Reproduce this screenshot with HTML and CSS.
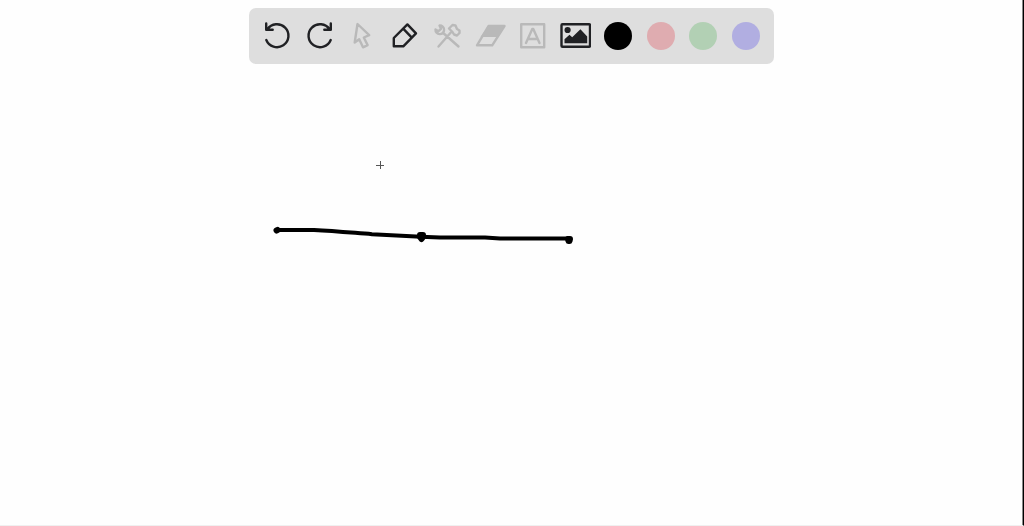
FILE: index.html
```
<!DOCTYPE html>
<html lang="en">
<head>
    <meta charset="UTF-8">
    <meta name="viewport" content="width=device-width, initial-scale=1.0">
    <title>Whiteboard</title>
    <link rel="stylesheet" href="styles.css">
</head>
<body>
    <main class="board">
        <div class="toolbar" role="toolbar" aria-label="Drawing tools">
            <button class="tool" type="button" aria-label="Undo">
                <svg viewBox="0 0 32 32"><path d="M5.200 3.500v6.300h6.500M5.200 9.800L6.400 9.300A11.500 11.500 0 1 1 5.300 20"/></svg>
            </button>
            <button class="tool" type="button" aria-label="Redo">
                <svg viewBox="0 0 32 32"><path d="M26.800 3.500v6.300h-6.500M26.800 9.800L25.600 9.300A11.500 11.500 0 1 0 26.700 20"/></svg>
            </button>
            <button class="tool muted" type="button" aria-label="Select">
                <svg viewBox="0 0 32 32"><path d="M11.500 4 8.700 22.500l4.500-3.200 3.800 8 4.600-2.200-3.800-7.600 5.400-2.300z"/></svg>
            </button>
            <button class="tool" type="button" aria-label="Pen">
                <svg viewBox="0 0 32 32"><path d="M18.400 4.400 27 13.300 14.300 26.300H4.800V18zM14.200 8.600l8.600 9"/></svg>
            </button>
            <button class="tool muted" type="button" aria-label="Tools">
                <svg viewBox="0 0 32 32">
                    <path d="M7.500 5.500A4.300 4.300 0 1 1 3.500 9.500L6.500 11.200 9 8.800zM11.200 13 26.500 26.500M18.800 12.500 6.500 26.500"/>
                    <path d="M17 8.500 20.500 5l3 .5 1.500 3.500 2.500 1.500v2.500l-2.500 2.500-3-1-1.500-2.500z"/>
                </svg>
            </button>
            <button class="tool muted" type="button" aria-label="Eraser">
                <svg viewBox="0 0 32 32"><path d="M14.500 6H30.500L18.200 25.300H3z"/><path class="solid" d="M14.500 5.500H30.500L23.500 17H6.500z"/></svg>
            </button>
            <button class="tool muted" type="button" aria-label="Text">
                <svg viewBox="0 0 32 32"><path d="M4.200 4.200h23v23h-23zM9 23l6.300-14h1L22.500 23M11 19h9.500"/></svg>
            </button>
            <button class="tool" type="button" aria-label="Image">
                <svg viewBox="0 0 32 32">
                    <rect x="2.500" y="4.200" width="28.500" height="22.600" rx="1"/>
                    <circle class="solid" cx="8.600" cy="10" r="3.100"/>
                    <path class="solid" d="M5.500 23.300v-4l5-4.500 2.700 2.400 8.200-8 6.800 7.300v6.800z"/>
                </svg>
            </button>
            <button class="tool" type="button" aria-label="Black"><span class="swatch black"></span></button>
            <button class="tool" type="button" aria-label="Red"><span class="swatch red"></span></button>
            <button class="tool" type="button" aria-label="Green"><span class="swatch green"></span></button>
            <button class="tool" type="button" aria-label="Blue"><span class="swatch blue"></span></button>
        </div>

        <svg class="drawing" aria-label="Drawing">
            <path class="stroke" d="M277 230H314C335 231 350 232.500 372 234.200L421 236.700L440 237.500H485L500 238.500H569"/>
            <path class="dot" d="M276.500 230.500 277.500 230"/>
            <path class="dot" d="M420 235 423 235 423 237 421.500 239 420 237z"/>
            <path class="dot" d="M568 239h2l-.5 2h-1z"/>
            <path class="cursor" d="M376 165.500h8M380.500 161v8"/>
        </svg>
    </main>
</body>
</html>
```
FILE: styles.css
```
body {
    margin: 0;
    background-color: #fefefe;
}

.board {
    position: relative;
    display: flex;
    justify-content: center;
    align-items: flex-start;
    box-sizing: border-box;
    min-height: 100vh;
    padding-top: 8px;
    border-right: 1px solid #000;
    border-bottom: 1px solid #f0f0f0;
    box-shadow: inset -1px 0 #888;
}

/* Toolbar */
.toolbar {
    display: flex;
    justify-content: space-between;
    box-sizing: border-box;
    width: 525px;
    max-width: 100%;
    padding: 12px;
    border-radius: 7px;
    background-color: #dedede;
}

.tool {
    display: flex;
    justify-content: center;
    align-items: center;
    width: 32px;
    height: 32px;
    padding: 0;
    border: none;
    background: none;
    color: #202124;
    cursor: pointer;
}

.tool.muted {
    color: #b9b9b9;
}

.tool svg {
    width: 32px;
    height: 32px;
    fill: none;
    stroke: currentColor;
    stroke-width: 2.4;
    stroke-linecap: round;
    stroke-linejoin: round;
}

.tool .solid {
    fill: currentColor;
    stroke: none;
}

.swatch {
    width: 28px;
    height: 28px;
    border-radius: 50%;
}

.black {
    background-color: #000;
}

.red {
    background-color: #dfacb0;
}

.green {
    background-color: #b2d0b4;
}

.blue {
    background-color: #b1aee1;
}

/* Drawing layer, lies over the whole board */
.drawing {
    position: absolute;
    top: 0;
    left: 0;
    width: 100%;
    height: 100%;
    pointer-events: none;
    fill: none;
    stroke: #000;
    stroke-linecap: round;
    stroke-linejoin: round;
}

.stroke {
    stroke-width: 4;
}

.dot {
    fill: #000;
    stroke-width: 6;
}

.cursor {
    stroke: #555;
    stroke-width: 1;
    stroke-linecap: butt;
}
```
